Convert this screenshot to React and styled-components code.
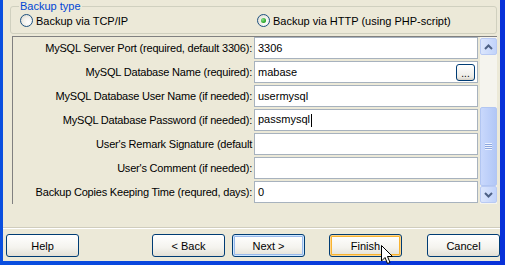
import React from "react";
import styled, { createGlobalStyle } from "styled-components";

const Global = createGlobalStyle`
  html, body { margin: 0; padding: 0; }
  body {
    width: 505px; height: 265px; overflow: hidden;
    background: #0A4FDF;
    font-family: "Liberation Sans", Arial, sans-serif;
    font-size: 11px;
    color: #000;
  }
  * { box-sizing: border-box; }
`;

const Window = styled.div`
  width: 505px;
  height: 265px;
  background: linear-gradient(to right, #0A4FDF, #0831D9);
  padding: 0 5px 4px 3px;
  display: flex;
`;

const Dialog = styled.div`
  flex: 1;
  background: #ECE9D8;
  display: flex;
  flex-direction: column;
`;

const TopArea = styled.div`
  padding: 0 3px 0 7px;
  display: flex;
  flex-direction: column;
`;

const GroupBox = styled.fieldset`
  margin: 0;
  border: 1px solid #D0D0BF;
  border-radius: 3px;
  padding: 0 0 5px 9px;
  min-width: 0;
  font-size: 11px;
`;

const Legend = styled.legend`
  color: #0046D5;
  padding: 0 1px;
  margin-left: -1px;
  line-height: 13px;
`;

const RadioRow = styled.div`
  display: grid;
  grid-template-columns: 237px 1fr;
  height: 15px;
  align-items: center;
`;

const RadioItem = styled.label`
  display: flex;
  align-items: center;
  gap: 3px;
  white-space: nowrap;
`;

const RadioCircle = styled.span`
  width: 13px;
  height: 13px;
  border-radius: 50%;
  border: 1px solid #1C5180;
  background: radial-gradient(circle at 65% 65%, #FFFFFF 0%, #F2F1EC 45%, #D6D3C8 100%);
  display: flex;
  align-items: center;
  justify-content: center;
  &::after {
    content: "";
    display: ${(p) => (p.$checked ? "block" : "none")};
    width: 5px;
    height: 5px;
    border-radius: 50%;
    background: radial-gradient(circle at 35% 35%, #8CE08C, #21A121 70%);
  }
`;

const Panel = styled.div`
  margin: 2px 0 0 2px;
  height: 168px;
  border-left: 1px solid #808080;
  border-top: 1px solid #808080;
  display: flex;
`;

const List = styled.div`
  flex: 1;
  display: flex;
  flex-direction: column;
  margin-top: -1px;
`;

const Row = styled.div`
  display: grid;
  grid-template-columns: 240px 1fr;
  height: 24.33px;
  align-items: center;
`;

const Label = styled.div`
  text-align: right;
  padding-right: 1px;
  white-space: nowrap;
  overflow: hidden;
  letter-spacing: -0.2px;
`;

const ValueBox = styled.div`
  margin: 0 2px 0 1px;
  height: 22px;
  background: #fff;
  border: 1px solid #A7B2BE;
  display: flex;
  align-items: center;
  padding: 0 2px 0 3px;
  white-space: nowrap;
`;

const ValueText = styled.span`
  flex: 1;
`;

const Caret = styled.span`
  display: inline-block;
  width: 1px;
  height: 13px;
  background: #000;
  vertical-align: middle;
  margin-left: 1px;
`;

const EllipsisButton = styled.span`
  width: 19px;
  height: 17px;
  border: 1px solid #003C74;
  border-radius: 3px;
  background: linear-gradient(#FFFFFF, #ECEBE6 80%, #D6D0C5);
  display: flex;
  align-items: flex-end;
  justify-content: center;
  font-size: 10px;
  line-height: 12px;
`;

const Scrollbar = styled.div`
  width: 17px;
  background: #F5F4EE;
  display: flex;
  flex-direction: column;
  padding: 1px 0;
`;

const ScrollButton = styled.div`
  height: 17px;
  border: 1px solid #B9CAF3;
  border-radius: 2px;
  background: linear-gradient(to right, #DCE6FC, #C1D3FB);
  display: flex;
  align-items: center;
  justify-content: center;
`;

const Track = styled.div`
  flex: 1;
  display: flex;
  flex-direction: column;
  padding-top: ${(p) => p.$offset}px;
`;

const Thumb = styled.div`
  flex: 1;
  border: 1px solid #B2C6F2;
  border-radius: 2px;
  background: linear-gradient(to right, #C9D8FC, #BBCEF9 60%, #B2C7F6);
  display: flex;
  align-items: center;
  justify-content: center;
`;

const Grip = styled.div`
  width: 7px;
  height: 7px;
  background: repeating-linear-gradient(#EEF3FE 0 1px, #8CA6DE 1px 2px);
`;

const Spacer = styled.div`
  flex: 1;
`;

const Separator = styled.div`
  height: 2px;
  border-top: 1px solid #D0CDBD;
  border-bottom: 1px solid #FFFFFF;
`;

const ButtonBar = styled.div`
  display: flex;
  padding: 5px 0 4px 3px;
`;

const Button = styled.button`
  width: 73px;
  height: 23px;
  font-family: inherit;
  font-size: 11px;
  color: #000;
  border: 1px solid #003C74;
  border-radius: 3px;
  background: linear-gradient(#FFFFFF, #F4F3EE 60%, #E3E0D6);
  margin-left: ${(p) => p.$gap || 0}px;
  box-shadow: ${(p) =>
    p.$hot
      ? "inset 0 0 0 1px #FFD58A, inset 0 0 0 2px #F8B330"
      : p.$default
      ? "inset 0 0 0 1px #CEE7FF, inset 0 0 0 2px #98B8EA"
      : "none"};
  padding: 0;
`;

const Cursor = styled.svg`
  position: absolute;
  left: 381px;
  top: 245px;
`;

const rows = [
  { label: "MySQL Server Port (required, default 3306):", value: "3306" },
  { label: "MySQL Database Name (required):", value: "mabase", ellipsis: true },
  { label: "MySQL Database User Name (if needed):", value: "usermysql" },
  { label: "MySQL Database Password (if needed):", value: "passmysql", caret: true },
  { label: "User's Remark Signature (default", value: "" },
  { label: "User's Comment (if needed):", value: "" },
  { label: "Backup Copies Keeping Time (requred, days):", value: "0" },
];

function Arrow({ up }) {
  return (
    <svg width="9" height="6" viewBox="0 0 9 6">
      <path
        d={up ? "M1 5 L4.5 1.5 L8 5" : "M1 1 L4.5 4.5 L8 1"}
        fill="none"
        stroke="#4D6185"
        strokeWidth="2"
      />
    </svg>
  );
}

export default function App() {
  return (
    <>
      <Global />
      <Window>
        <Dialog>
          <TopArea>
            <GroupBox>
              <Legend>Backup type</Legend>
              <RadioRow>
                <RadioItem>
                  <RadioCircle />
                  Backup via TCP/IP
                </RadioItem>
                <RadioItem>
                  <RadioCircle $checked />
                  Backup via HTTP (using PHP-script)
                </RadioItem>
              </RadioRow>
            </GroupBox>
            <Panel>
              <List>
                {rows.map((r) => (
                  <Row key={r.label}>
                    <Label>{r.label}</Label>
                    <ValueBox>
                      <ValueText>
                        {r.value}
                        {r.caret && <Caret />}
                      </ValueText>
                      {r.ellipsis && <EllipsisButton>...</EllipsisButton>}
                    </ValueBox>
                  </Row>
                ))}
              </List>
              <Scrollbar>
                <ScrollButton>
                  <Arrow up />
                </ScrollButton>
                <Track $offset={52}>
                  <Thumb>
                    <Grip />
                  </Thumb>
                </Track>
                <ScrollButton>
                  <Arrow />
                </ScrollButton>
              </Scrollbar>
            </Panel>
          </TopArea>
          <Spacer />
          <Separator />
          <ButtonBar>
            <Button>Help</Button>
            <Button $gap={73}>&lt; Back</Button>
            <Button $gap={7} $default>Next &gt;</Button>
            <Button $gap={24} $hot>Finish</Button>
            <Button $gap={25}>Cancel</Button>
          </ButtonBar>
        </Dialog>
      </Window>
      <Cursor width="14" height="21" viewBox="0 0 14 21">
        <path
          d="M0.5 0.5 L0.5 16 L4 12.5 L6.5 18.5 L9 17.5 L6.5 11.5 L11.5 11.5 Z"
          fill="#fff"
          stroke="#000"
          strokeWidth="1"
        />
      </Cursor>
    </>
  );
}
